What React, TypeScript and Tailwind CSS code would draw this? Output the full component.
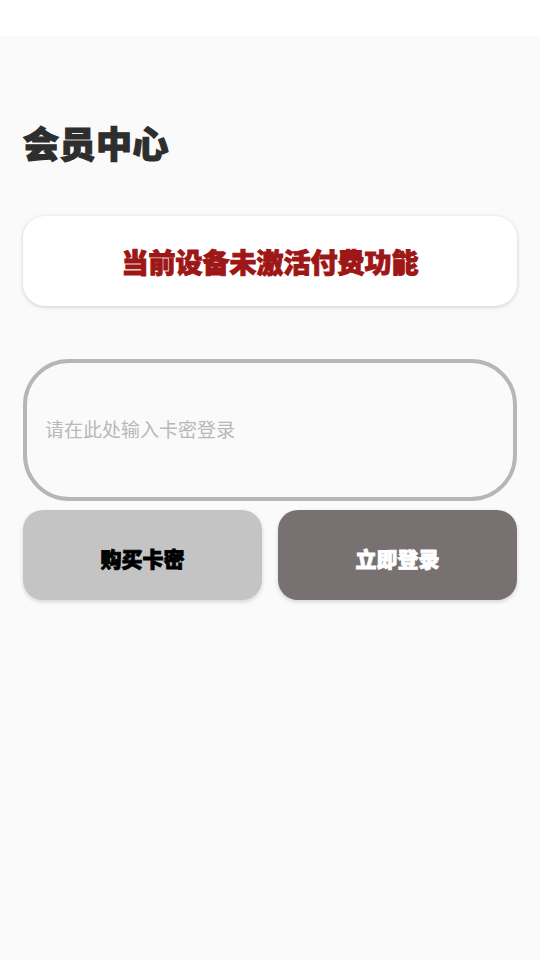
import React from "react";

export default function App() {
  const cjk = { fontFamily: '"Noto Sans CJK SC", "Noto Sans", sans-serif' };
  return (
    <div className="w-[540px] h-[960px] bg-[#fafafa] flex flex-col overflow-hidden" style={cjk}>
      <div className="h-[36px] bg-white shrink-0" />
      <div className="flex flex-col px-[23px]">
        <h1 className="mt-[82px] h-[48px] leading-[48px] text-[36px] font-black text-[#2e2e2e] tracking-[0.5px] [-webkit-text-stroke:1.2px_#2e2e2e]">会员中心</h1>
        <div className="mt-[50px] h-[90px] rounded-[22px] bg-white shadow-[0_1px_4px_rgba(0,0,0,0.18)] flex items-center justify-center">
          <span className="text-[27px] font-black text-[#9e1717] leading-none [-webkit-text-stroke:1px_#9e1717]">当前设备未激活付费功能</span>
        </div>
        <div className="mt-[53px] h-[142px] rounded-[46px] border-[4px] border-[#b6b6b6] bg-[#fafafa] flex items-center px-[18px]">
          <span className="text-[19px] text-[#b8b8b8] leading-none -mt-[3px]">请在此处输入卡密登录</span>
        </div>
        <div className="mt-[9px] grid grid-cols-2 gap-[16px]">
          <button className="h-[90px] rounded-[20px] bg-[#c4c4c4] shadow-[0_2px_4px_rgba(0,0,0,0.15)] flex items-center justify-center pt-[8px] text-[21px] font-black text-black [-webkit-text-stroke:0.8px_#000]">
            购买卡密
          </button>
          <button className="h-[90px] rounded-[20px] bg-[#777171] shadow-[0_2px_4px_rgba(0,0,0,0.15)] flex items-center justify-center pt-[8px] text-[21px] font-black text-white [-webkit-text-stroke:0.8px_#fff]">
            立即登录
          </button>
        </div>
      </div>
    </div>
  );
}
